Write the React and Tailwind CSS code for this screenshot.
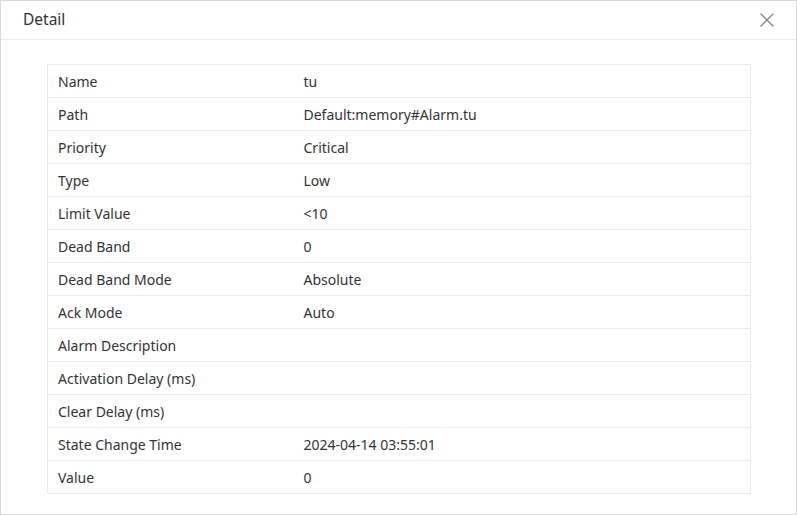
import { X } from 'lucide-react'

const rows = [
  ['Name', 'tu'],
  ['Path', 'Default:memory#Alarm.tu'],
  ['Priority', 'Critical'],
  ['Type', 'Low'],
  ['Limit Value', '<10'],
  ['Dead Band', '0'],
  ['Dead Band Mode', 'Absolute'],
  ['Ack Mode', 'Auto'],
  ['Alarm Description', ''],
  ['Activation Delay (ms)', ''],
  ['Clear Delay (ms)', ''],
  ['State Change Time', '2024-04-14 03:55:01'],
  ['Value', '0'],
]

export default function App() {
  return (
    <div className="w-[797px] h-[515px] bg-white border border-[#d9d9d9] flex flex-col text-[#333] font-['Noto_Sans',sans-serif]">
      <div className="h-[39px] border-b border-[#ebebeb] flex items-center justify-between pl-[22px] pr-[17px] shrink-0">
        <span className="text-[15.5px]">Detail</span>
        <X className="w-[24px] h-[24px] text-[#888]" strokeWidth={1.4} />
      </div>
      <div className="pt-[24px] pl-[46px] pr-[45px]">
        <table className="w-full border-collapse border border-[#ebebeb] text-[14px]">
          <tbody>
            {rows.map(([k, v]) => (
              <tr key={k} className="h-[33px] border-b border-[#ebebeb]">
                <td className="w-[246px] pl-[10px]">{k}</td>
                <td className="pl-[10px]">{v}</td>
              </tr>
            ))}
          </tbody>
        </table>
      </div>
    </div>
  )
}
